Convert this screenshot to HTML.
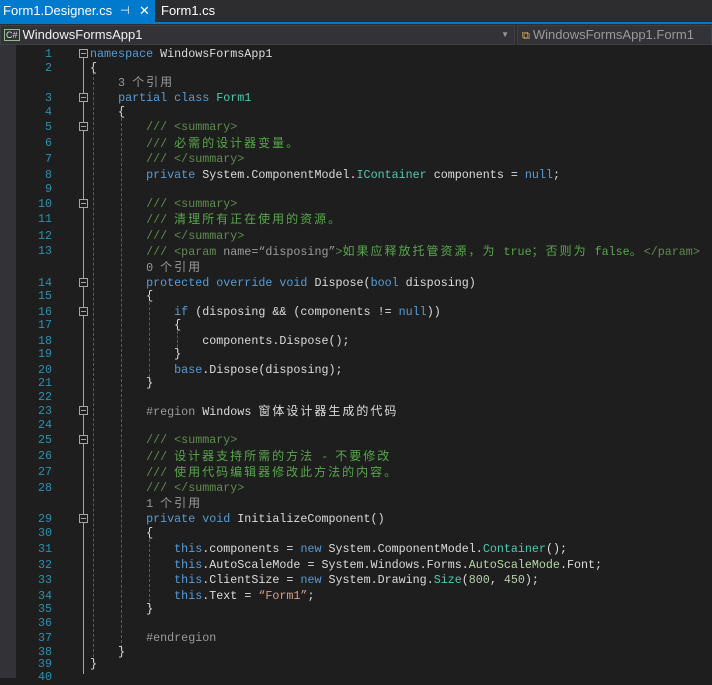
<!DOCTYPE html>
<html><head><meta charset="utf-8"><style>
*{margin:0;padding:0;box-sizing:border-box}
body{width:712px;height:678px;background:#1e1e1e;overflow:hidden;position:relative;font-family:"Liberation Sans","Noto Sans CJK SC",sans-serif}
#tabs{position:absolute;left:0;top:0;width:712px;height:22px;background:#2d2d30}
#tabline{position:absolute;left:0;top:22px;width:712px;height:2px;background:#007acc}
.tab{position:absolute;top:0;height:22px;line-height:22px;font-size:13px;color:#fff;padding-left:3px}
#nav{position:absolute;left:0;top:24px;width:712px;height:21px;background:#2d2d30}
.dd{position:absolute;top:1px;height:20px;border:1px solid #3f3f46;background:#333337;font-size:13px;line-height:18px;color:#f1f1f1}
#strip{position:absolute;left:0;top:45px;width:16px;height:633px;background:#333337}
.ln{position:absolute;left:16px;width:36px;text-align:right;font:11.7px "Liberation Mono",monospace;color:#2b91af;height:16px;line-height:16px}
.l{position:absolute;left:90px;white-space:pre;font:11.7px "Liberation Mono","Noto Sans CJK SC",monospace;color:#dcdcdc;height:16px;line-height:16px}
.c{font-family:"Noto Sans CJK SC",sans-serif;font-size:12px;letter-spacing:2px}
.k{color:#569cd6}.t{color:#4ec9b0}.s{color:#d69d85}.e{color:#b8d7a3}.n{color:#b5cea8}
.d{color:#608b4e}.g{color:#57a64a}.lens{color:#999}.p{color:#9b9b9b}
.box{position:absolute;left:79px;width:9px;height:9px;border:1px solid #a5a5a5;background:#1e1e1e}
.box:after{content:"";position:absolute;left:1px;top:3px;width:5px;height:1px;background:#a5a5a5}
.vl{position:absolute;width:1px;background:#a5a5a5;left:83px}
.gd{position:absolute;width:0;border-left:1px dashed #5a5a5a}
</style></head><body>
<div id="tabs">
<div class="tab" style="left:0;width:155px;background:#007acc">Form1.Designer.cs<span style="position:absolute;left:120px;font-size:11px">⊣</span><span style="position:absolute;left:139px">✕</span></div>
<div class="tab" style="left:158px">Form1.cs</div>
</div>
<div id="tabline"></div>
<div id="nav">
<div class="dd" style="left:0;width:515px"><span style="display:inline-block;margin:3px 3px 0 3px;border:1px solid #8fbc8f;font-size:9px;line-height:10px;padding:0 1px;vertical-align:top;color:#ddd">C#</span>WindowsFormsApp1<span style="position:absolute;right:5px;font-size:8px;color:#999">▼</span></div>
<div class="dd" style="left:517px;width:195px;color:#999"><span style="color:#e8b76a;font-size:11px;margin:0 3px 0 4px">⧉</span>WindowsFormsApp1.Form1</div>
</div>
<div id="strip"></div>

<div class="vl" style="top:58px;height:616px"></div>
<div class="gd" style="left:93px;top:72px;height:590px"></div>
<div class="gd" style="left:121px;top:118px;height:530px"></div>
<div class="gd" style="left:149px;top:302px;height:80px"></div>
<div class="gd" style="left:177px;top:331px;height:21px"></div>
<div class="gd" style="left:149px;top:539px;height:68px"></div>

<div class="ln" style="top:46px">1</div><div class="box" style="top:49px"></div><div class="l" style="top:46px"><span class="k">namespace</span> WindowsFormsApp1</div>
<div class="ln" style="top:60px">2</div><div class="l" style="top:60px">{</div>
<div class="l lens" style="top:74px">    3 <span class="c">个引用</span></div>
<div class="ln" style="top:90px">3</div><div class="box" style="top:93px"></div><div class="l" style="top:90px">    <span class="k">partial class</span> <span class="t">Form1</span></div>
<div class="ln" style="top:104px">4</div><div class="l" style="top:104px">    {</div>
<div class="ln" style="top:119px">5</div><div class="box" style="top:122px"></div><div class="l" style="top:119px">        <span class="d">/// &lt;summary&gt;</span></div>
<div class="ln" style="top:135px">6</div><div class="l" style="top:135px">        <span class="d">///</span> <span class="g c">必需的设计器变量。</span></div>
<div class="ln" style="top:151px">7</div><div class="l" style="top:151px">        <span class="d">/// &lt;/summary&gt;</span></div>
<div class="ln" style="top:167px">8</div><div class="l" style="top:167px">        <span class="k">private</span> System.ComponentModel.<span class="t">IContainer</span> components = <span class="k">null</span>;</div>
<div class="ln" style="top:181px">9</div>
<div class="ln" style="top:196px">10</div><div class="box" style="top:199px"></div><div class="l" style="top:196px">        <span class="d">/// &lt;summary&gt;</span></div>
<div class="ln" style="top:211px">11</div><div class="l" style="top:211px">        <span class="d">///</span> <span class="g c">清理所有正在使用的资源。</span></div>
<div class="ln" style="top:228px">12</div><div class="l" style="top:228px">        <span class="d">/// &lt;/summary&gt;</span></div>
<div class="ln" style="top:243px">13</div><div class="l" style="top:243px">        <span class="d">/// &lt;param</span> <span class="p">name=“disposing”</span><span class="d">&gt;</span><span class="g"><span class="c">如果应释放托管资源，为</span> true<span class="c">；否则为</span> false<span class="c">。</span></span><span class="d">&lt;/param&gt;</span></div>
<div class="l lens" style="top:259px">        0 <span class="c">个引用</span></div>
<div class="ln" style="top:275px">14</div><div class="box" style="top:278px"></div><div class="l" style="top:275px">        <span class="k">protected override void</span> Dispose(<span class="k">bool</span> disposing)</div>
<div class="ln" style="top:288px">15</div><div class="l" style="top:288px">        {</div>
<div class="ln" style="top:304px">16</div><div class="box" style="top:307px"></div><div class="l" style="top:304px">            <span class="k">if</span> (disposing &amp;&amp; (components != <span class="k">null</span>))</div>
<div class="ln" style="top:317px">17</div><div class="l" style="top:317px">            {</div>
<div class="ln" style="top:333px">18</div><div class="l" style="top:333px">                components.Dispose();</div>
<div class="ln" style="top:346px">19</div><div class="l" style="top:346px">            }</div>
<div class="ln" style="top:362px">20</div><div class="l" style="top:362px">            <span class="k">base</span>.Dispose(disposing);</div>
<div class="ln" style="top:375px">21</div><div class="l" style="top:375px">        }</div>
<div class="ln" style="top:389px">22</div>
<div class="ln" style="top:403px">23</div><div class="box" style="top:406px"></div><div class="l" style="top:403px">        <span class="p">#region</span> Windows <span class="c">窗体设计器生成的代码</span></div>
<div class="ln" style="top:417px">24</div>
<div class="ln" style="top:432px">25</div><div class="box" style="top:435px"></div><div class="l" style="top:432px">        <span class="d">/// &lt;summary&gt;</span></div>
<div class="ln" style="top:448px">26</div><div class="l" style="top:448px">        <span class="d">///</span> <span class="g"><span class="c">设计器支持所需的方法</span> - <span class="c">不要修改</span></span></div>
<div class="ln" style="top:464px">27</div><div class="l" style="top:464px">        <span class="d">///</span> <span class="g c">使用代码编辑器修改此方法的内容。</span></div>
<div class="ln" style="top:480px">28</div><div class="l" style="top:480px">        <span class="d">/// &lt;/summary&gt;</span></div>
<div class="l lens" style="top:495px">        1 <span class="c">个引用</span></div>
<div class="ln" style="top:511px">29</div><div class="box" style="top:514px"></div><div class="l" style="top:511px">        <span class="k">private void</span> InitializeComponent()</div>
<div class="ln" style="top:525px">30</div><div class="l" style="top:525px">        {</div>
<div class="ln" style="top:541px">31</div><div class="l" style="top:541px">            <span class="k">this</span>.components = <span class="k">new</span> System.ComponentModel.<span class="t">Container</span>();</div>
<div class="ln" style="top:557px">32</div><div class="l" style="top:557px">            <span class="k">this</span>.AutoScaleMode = System.Windows.Forms.<span class="e">AutoScaleMode</span>.Font;</div>
<div class="ln" style="top:572px">33</div><div class="l" style="top:572px">            <span class="k">this</span>.ClientSize = <span class="k">new</span> System.Drawing.<span class="t">Size</span>(<span class="n">800</span>, <span class="n">450</span>);</div>
<div class="ln" style="top:588px">34</div><div class="l" style="top:588px">            <span class="k">this</span>.Text = <span class="s">“Form1”</span>;</div>
<div class="ln" style="top:601px">35</div><div class="l" style="top:601px">        }</div>
<div class="ln" style="top:615px">36</div>
<div class="ln" style="top:630px">37</div><div class="l" style="top:630px">        <span class="p">#endregion</span></div>
<div class="ln" style="top:644px">38</div><div class="l" style="top:644px">    }</div>
<div class="ln" style="top:656px">39</div><div class="l" style="top:656px">}</div>
<div class="ln" style="top:669px">40</div>
</body></html>
